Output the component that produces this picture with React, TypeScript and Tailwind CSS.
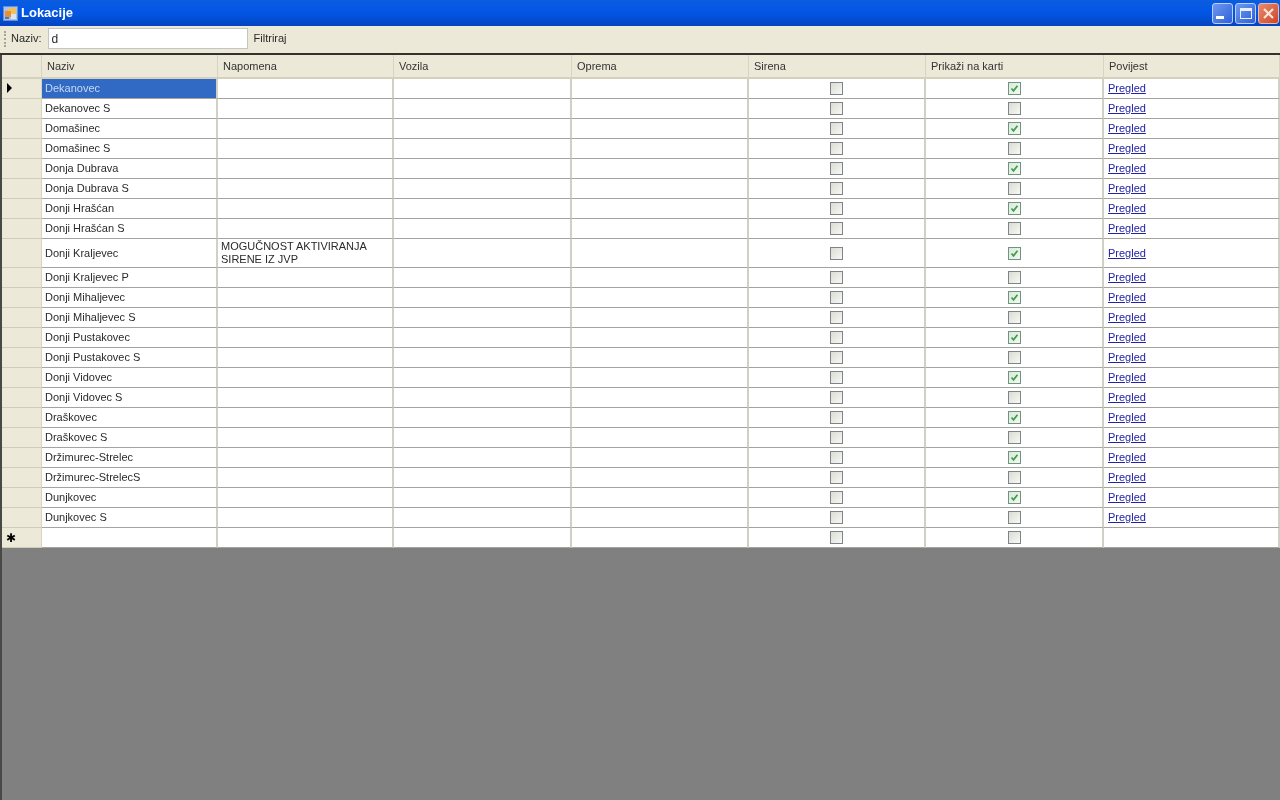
import { Fragment } from 'react'
import type { ReactNode } from 'react'

const rows: { name: string; note?: string; map: boolean }[] = [
  { name: 'Dekanovec', map: true },
  { name: 'Dekanovec S', map: false },
  { name: 'Domašinec', map: true },
  { name: 'Domašinec S', map: false },
  { name: 'Donja Dubrava', map: true },
  { name: 'Donja Dubrava S', map: false },
  { name: 'Donji Hrašćan', map: true },
  { name: 'Donji Hrašćan S', map: false },
  { name: 'Donji Kraljevec', note: 'MOGUČNOST AKTIVIRANJA SIRENE IZ JVP', map: true },
  { name: 'Donji Kraljevec P', map: false },
  { name: 'Donji Mihaljevec', map: true },
  { name: 'Donji Mihaljevec S', map: false },
  { name: 'Donji Pustakovec', map: true },
  { name: 'Donji Pustakovec S', map: false },
  { name: 'Donji Vidovec', map: true },
  { name: 'Donji Vidovec S', map: false },
  { name: 'Draškovec', map: true },
  { name: 'Draškovec S', map: false },
  { name: 'Držimurec-Strelec', map: true },
  { name: 'Držimurec-StrelecS', map: false },
  { name: 'Dunjkovec', map: true },
  { name: 'Dunjkovec S', map: false },
]

const columns = ['Naziv', 'Napomena', 'Vozila', 'Oprema', 'Sirena', 'Prikaži na karti', 'Povijest']

function CheckBox({ checked }: { checked: boolean }) {
  return (
    <div className={`w-[13px] h-[13px] border flex items-center justify-center bg-gradient-to-br ${checked ? 'border-[#6f9480] from-[#dce8dc] to-[#f4f8f2]' : 'border-[#7f8488] from-[#dcdcd6] to-[#f8f8f4]'}`}>
      {checked && (
        <svg width="9" height="9" viewBox="0 0 9 9">
          <path d="M1.5 4.5 L3.5 6.8 L7.5 1.8" fill="none" stroke="#3fa04a" strokeWidth="1.8" />
        </svg>
      )}
    </div>
  )
}

function WindowButton({ color, children }: { color: string; children: ReactNode }) {
  return (
    <div className={`w-[21px] h-[21px] rounded-[3px] border flex items-center justify-center ${color}`}>
      {children}
    </div>
  )
}

const cell = 'border-r-2 border-r-[#d0d0c8] border-b border-b-[#a4a49c] flex items-center overflow-hidden'
const headerCell = 'border-r border-[#d8d4c4] bg-[#ece9d8] border-b-2 border-b-[#d4d0bc] flex items-center pl-[5px] text-[#333]'
const rowHeader = 'bg-[#ece9d8] border-r border-r-[#d8d4c2] border-b border-b-[#d0ccb8] flex items-center'

export default function App() {
  return (
    <div className="w-[1280px] h-[800px] flex flex-col overflow-hidden bg-[#808080] text-[11px] text-[#2a2a2a] blur-[0.6px] font-['Liberation_Sans',sans-serif]">
      {/* Title bar */}
      <div className="h-[26px] shrink-0 flex items-center justify-between pl-[3px] pr-[1px] bg-gradient-to-b from-[#0a5ce0] via-[#0256e4] to-[#0344c0]">
        <div className="flex items-center gap-[3px]">
          <svg width="15" height="15" viewBox="0 0 15 15">
            <rect x="0.5" y="0.5" width="14" height="14" fill="#a8c4ea" stroke="#6a90c8" />
            <rect x="5" y="2" width="8" height="6" fill="#f0c060" />
            <rect x="2" y="5" width="6" height="6" fill="#e89030" />
            <rect x="8" y="8" width="5" height="5" fill="#d8e4f4" />
            <rect x="2" y="11" width="4" height="2" fill="#4878c0" />
          </svg>
          <span className="text-[13px] font-bold text-white">Lokacije</span>
        </div>
        <div className="flex items-center gap-[2px]">
          <WindowButton color="border-[#b8d0f8] bg-gradient-to-br from-[#6f98f0] to-[#2f5fd8]">
            <div className="w-[8px] h-[3px] bg-white mt-[9px] mr-[5px]" />
          </WindowButton>
          <WindowButton color="border-[#b8d0f8] bg-gradient-to-br from-[#6f98f0] to-[#2f5fd8]">
            <div className="w-[12px] h-[11px] border border-[#e8f0ff] border-t-[3px]" />
          </WindowButton>
          <WindowButton color="border-[#ecb8a8] bg-gradient-to-br from-[#e88a6c] to-[#cc4428]">
            <svg width="13" height="13" viewBox="0 0 13 13">
              <path d="M2 2 L11 11 M11 2 L2 11" stroke="#fbe6d8" strokeWidth="2.2" />
            </svg>
          </WindowButton>
        </div>
      </div>

      {/* Toolbar */}
      <div className="h-[29px] shrink-0 flex items-center bg-[#ece9d8] border-b-2 border-b-[#33332d] pl-[4px] pb-[2px]">
        <div className="w-[2px] h-[16px] mr-[5px] border-l-2 border-dotted border-[#a8a490]" />
        <span className="mr-[6px]">Naziv:</span>
        <div className="w-[200px] h-[21px] bg-white border border-[#c4c4c0] flex items-center pl-[3px] text-[12px]">d</div>
        <span className="ml-[6px]">Filtriraj</span>
      </div>

      {/* Grid */}
      <div className="flex-1 border-l-2 border-[#484844]">
        <div className="grid grid-cols-[40px_176px_176px_178px_177px_177px_178px_176px] grid-rows-[24px_repeat(8,20px)_29px_repeat(14,20px)]">
          <div className={headerCell} />
          {columns.map((c) => (
            <div key={c} className={headerCell}>{c}</div>
          ))}
          {rows.map((r, i) => (
            <Fragment key={r.name}>
              <div className={`${rowHeader} pl-[5px]`}>
                {i === 0 && <div className="w-0 h-0 mb-[2px] border-y-[5px] border-y-transparent border-l-[5px] border-l-black" />}
              </div>
              <div className={`${cell} pl-[3px] ${i === 0 ? 'bg-[#316ac5] text-[#c8d8f0]' : 'bg-white'}`}>{r.name}</div>
              <div className={`${cell} bg-white pl-[3px] pr-[20px] leading-[13px]`}>{r.note}</div>
              <div className={`${cell} bg-white`} />
              <div className={`${cell} bg-white`} />
              <div className={`${cell} bg-white justify-center`}><CheckBox checked={false} /></div>
              <div className={`${cell} bg-white justify-center`}><CheckBox checked={r.map} /></div>
              <div className={`${cell} bg-white pl-[4px]`}>
                <a href="#" className="text-[#2222aa] underline">Pregled</a>
              </div>
            </Fragment>
          ))}
          <div className={`${rowHeader} pl-[4px]`}>
            <span className="text-[12px] leading-none text-black">✱</span>
          </div>
          <div className={`${cell} bg-white`} />
          <div className={`${cell} bg-white`} />
          <div className={`${cell} bg-white`} />
          <div className={`${cell} bg-white`} />
          <div className={`${cell} bg-white justify-center`}><CheckBox checked={false} /></div>
          <div className={`${cell} bg-white justify-center`}><CheckBox checked={false} /></div>
          <div className={`${cell} bg-white`} />
        </div>
      </div>
    </div>
  )
}
